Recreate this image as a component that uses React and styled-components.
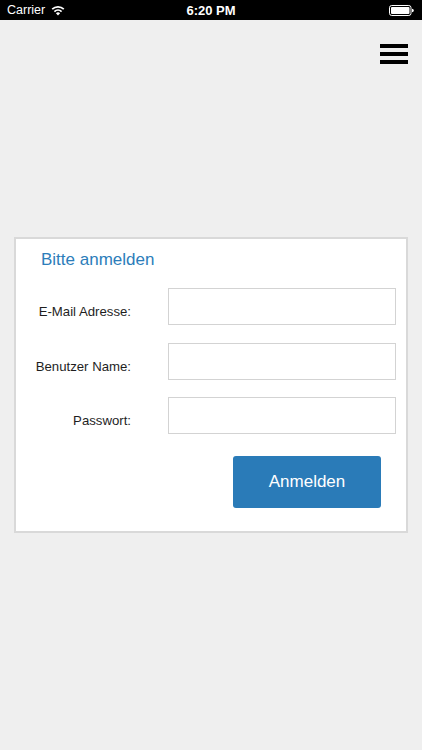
import React from "react";
import styled, { createGlobalStyle } from "styled-components";

const GlobalStyle = createGlobalStyle`
  html, body {
    margin: 0;
    padding: 0;
    background: #efefef;
    font-family: "Liberation Sans", Arial, sans-serif;
  }
  * {
    box-sizing: border-box;
  }
`;

const Page = styled.div`
  width: 422px;
  min-height: 750px;
  background: #efefef;
`;

const StatusBar = styled.div`
  height: 20px;
  background: #000;
  color: #fff;
  display: grid;
  grid-template-columns: 1fr auto 1fr;
  align-items: center;
  padding: 0 7px;
  font-size: 12.5px;
`;

const StatusLeft = styled.div`
  display: flex;
  align-items: center;
  gap: 6px;
`;

const Clock = styled.div`
  font-weight: 700;
  font-size: 13px;
`;

const StatusRight = styled.div`
  display: flex;
  justify-content: flex-end;
  padding-right: 1px;
`;

const Header = styled.div`
  display: flex;
  justify-content: flex-end;
  padding: 24px 14px 0 0;
`;

const MenuButton = styled.button`
  display: flex;
  flex-direction: column;
  gap: 4px;
  padding: 0;
  border: 0;
  background: none;
  cursor: pointer;
`;

const Bar = styled.span`
  display: block;
  width: 28px;
  height: 4px;
  background: #000;
`;

const Card = styled.div`
  margin: 173px 14px 0;
  background: #fff;
  border: 2px solid #d9d9d9;
  padding: 11px 25px 23px 0;
`;

const Title = styled.h2`
  margin: 0 0 18px 25px;
  font-size: 17px;
  line-height: 20px;
  font-weight: 400;
  color: #2c7dba;
`;

const Form = styled.div`
  display: grid;
  grid-template-columns: 115px 228px;
  column-gap: 37px;
  row-gap: 17.5px;
  align-items: center;
`;

const Label = styled.label`
  text-align: right;
  font-size: 13.2px;
  color: #1e1e1e;
  padding-top: 10px;
`;

const Input = styled.input`
  height: 37px;
  width: 228px;
  border: 1px solid #d3d3d3;
  background: #fff;
  outline: none;
  font-size: 14px;
  padding: 0 8px;
`;

const Actions = styled.div`
  display: flex;
  justify-content: flex-end;
  margin-top: 22px;
`;

const SubmitButton = styled.button`
  width: 148px;
  height: 52px;
  border: 0;
  border-radius: 3px;
  background: #2a7bb8;
  color: #fff;
  font-family: inherit;
  font-size: 17px;
  cursor: pointer;
`;

const Wifi = () => (
  <svg width="14" height="11" viewBox="0 0 14 11">
    <path d="M7 10.5 L4.9 8.2 A3 3 0 0 1 9.1 8.2 Z" fill="#fff" />
    <path d="M3.4 6.6 A5.2 5.2 0 0 1 10.6 6.6" stroke="#fff" strokeWidth="1.7" fill="none" />
    <path d="M1.2 4.2 A8.3 8.3 0 0 1 12.8 4.2" stroke="#fff" strokeWidth="1.7" fill="none" />
  </svg>
);

const Battery = () => (
  <svg width="25" height="11" viewBox="0 0 25 11">
    <rect x="0.5" y="0.5" width="21.5" height="10" rx="2.2" stroke="#fff" fill="none" />
    <rect x="2" y="2" width="18.5" height="7" rx="1" fill="#fff" />
    <path d="M23 3.7 a1.8 1.8 0 0 1 0 3.6 Z" fill="#fff" />
  </svg>
);

const fields = [
  { id: "email", label: "E-Mail Adresse:", type: "email" },
  { id: "user", label: "Benutzer Name:", type: "text" },
  { id: "pass", label: "Passwort:", type: "password" },
];

export default function App() {
  return (
    <Page>
      <GlobalStyle />
      <StatusBar>
        <StatusLeft>
          <span>Carrier</span>
          <Wifi />
        </StatusLeft>
        <Clock>6:20 PM</Clock>
        <StatusRight>
          <Battery />
        </StatusRight>
      </StatusBar>

      <Header>
        <MenuButton aria-label="Menü">
          <Bar />
          <Bar />
          <Bar />
        </MenuButton>
      </Header>

      <Card>
        <Title>Bitte anmelden</Title>
        <Form>
          {fields.map((f) => (
            <React.Fragment key={f.id}>
              <Label htmlFor={f.id}>{f.label}</Label>
              <Input id={f.id} type={f.type} />
            </React.Fragment>
          ))}
        </Form>
        <Actions>
          <SubmitButton>Anmelden</SubmitButton>
        </Actions>
      </Card>
    </Page>
  );
}
